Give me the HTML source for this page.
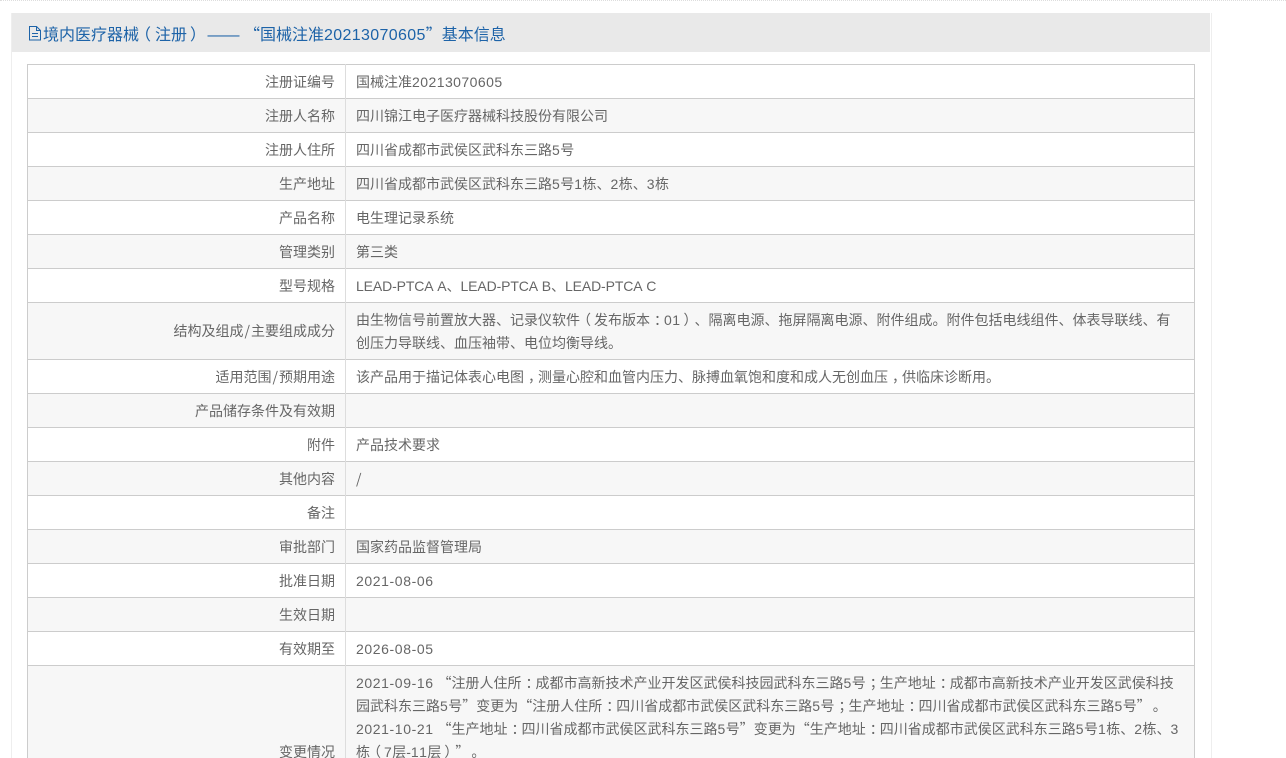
<!DOCTYPE html>
<html lang="zh-CN"><head><meta charset="utf-8"><style>
html,body{margin:0;padding:0;background:#fff;width:1286px;height:758px;overflow:hidden}
body{position:relative;font-family:"Liberation Sans","Noto Sans CJK SC",sans-serif;font-size:14px;color:#666;text-spacing-trim:space-all;font-kerning:none}
.abs{position:absolute}
#dots{left:0;top:0;width:1286px;height:1px;border-top:1px dotted #ddd}
#wrap{left:11px;top:13px;width:1199px;height:760px;border-left:1px solid #eee;border-right:1px solid #eee}
#head{left:12px;top:13px;width:1198px;height:39px;background:#e9e9e9}
#title{left:43px;top:23px;font-size:16px;line-height:20px;color:#1d63a8;white-space:nowrap}
#title .a{left:-4px}#title .b{left:3px}
.r{position:absolute;left:27px;width:1167px;border-top:1px solid #ccc;box-sizing:border-box}
.g{background:#f7f7f7}
.l{position:absolute;right:951px;text-align:right;white-space:nowrap;line-height:23px}
.v{position:absolute;left:356px;white-space:nowrap;line-height:23px}
.n{letter-spacing:.45px}
.d{letter-spacing:.6px}
.m{letter-spacing:-.12px}
.q,.s,.a,.b,.sl{font-family:"Noto Sans CJK SC",sans-serif}
.s{position:relative;left:4px}
.e{position:relative;left:2px}
.a{position:relative;left:-3px}
.b{position:relative;left:3px}
.sl{padding:0 1px}
</style></head><body>
<div id="dots" class="abs"></div>
<div id="wrap" class="abs"></div>
<div id="head" class="abs"></div>
<svg class="abs" style="left:28px;top:26px" width="14" height="15" viewBox="0 0 14 15" fill="none" stroke="#1d63a8" stroke-width="1"><path d="M1.500 .5h7l4 4v9.500h-11z M8.500 .5v4h4 M4 7.500h6 M4 10.500h6"/></svg>
<div id="title" class="abs">境内医疗器械<span class="a">（</span>注册<span class="b">）</span> —— <span class="q">“</span>国械注准<span style="letter-spacing:.35px">20213070605</span><span class="q">”</span>基本信息</div>

<div class="r" style="top:64px;height:35px"></div>
<div class="r g" style="top:98px;height:35px"></div>
<div class="r" style="top:132px;height:35px"></div>
<div class="r g" style="top:166px;height:35px"></div>
<div class="r" style="top:200px;height:35px"></div>
<div class="r g" style="top:234px;height:35px"></div>
<div class="r" style="top:268px;height:35px"></div>
<div class="r g" style="top:302px;height:58px"></div>
<div class="r" style="top:359px;height:35px"></div>
<div class="r g" style="top:393px;height:35px"></div>
<div class="r" style="top:427px;height:35px"></div>
<div class="r g" style="top:461px;height:35px"></div>
<div class="r" style="top:495px;height:35px"></div>
<div class="r g" style="top:529px;height:35px"></div>
<div class="r" style="top:563px;height:35px"></div>
<div class="r g" style="top:597px;height:35px"></div>
<div class="r" style="top:631px;height:35px"></div>
<div class="r g" style="top:665px;height:100px"></div>
<div class="abs" style="left:27px;top:64px;width:1px;height:694px;background:#ccc"></div>
<div class="abs" style="left:345px;top:64px;width:1px;height:694px;background:#ddd"></div>
<div class="abs" style="left:1194px;top:64px;width:1px;height:694px;background:#ccc"></div>

<div class="l" style="top:71px">注册证编号</div><div class="v" style="top:71px">国械注准<span class="n">20213070605</span></div>
<div class="l" style="top:105px">注册人名称</div><div class="v" style="top:105px">四川锦江电子医疗器械科技股份有限公司</div>
<div class="l" style="top:139px">注册人住所</div><div class="v" style="top:139px">四川省成都市武侯区武科东三路<span class="n">5</span>号</div>
<div class="l" style="top:173px">生产地址</div><div class="v" style="top:173px">四川省成都市武侯区武科东三路<span class="n">5</span>号<span class="n">1</span>栋、<span class="n">2</span>栋、<span class="n">3</span>栋</div>
<div class="l" style="top:207px">产品名称</div><div class="v" style="top:207px">电生理记录系统</div>
<div class="l" style="top:241px">管理类别</div><div class="v" style="top:241px">第三类</div>
<div class="l" style="top:275px">型号规格</div><div class="v" style="top:275px"><span class="m">LEAD-PTCA A</span>、<span class="m">LEAD-PTCA B</span>、<span class="m">LEAD-PTCA C</span></div>
<div class="l" style="top:320px">结构及组成<span class="sl">/</span>主要组成成分</div>
<div class="v" style="top:309px">由生物信号前置放大器、记录仪软件<span class="a">（</span>发布版本<span class="s">：</span><span class="n">01</span><span class="b">）</span>、隔离电源、拖屏隔离电源、附件组成。附件包括电线组件、体表导联线、有</div>
<div class="v" style="top:332px">创压力导联线、血压袖带、电位均衡导线。</div>
<div class="l" style="top:366px">适用范围<span class="sl">/</span>预期用途</div><div class="v" style="top:366px">该产品用于描记体表心电图<span class="s">，</span>测量心腔和血管内压力、脉搏血氧饱和度和成人无创血压<span class="s">，</span>供临床诊断用。</div>
<div class="l" style="top:400px">产品储存条件及有效期</div>
<div class="l" style="top:434px">附件</div><div class="v" style="top:434px">产品技术要求</div>
<div class="l" style="top:468px">其他内容</div><div class="v" style="top:468px"><span class="sl" style="padding:0">/</span></div>
<div class="l" style="top:502px">备注</div>
<div class="l" style="top:536px">审批部门</div><div class="v" style="top:536px">国家药品监督管理局</div>
<div class="l" style="top:570px">批准日期</div><div class="v" style="top:570px"><span class="d">2021-08-06</span></div>
<div class="l" style="top:604px">生效日期</div>
<div class="l" style="top:638px">有效期至</div><div class="v" style="top:638px"><span class="d">2026-08-05</span></div>
<div class="l" style="top:741px">变更情况</div>
<div class="v" style="top:672px"><span class="d">2021-09-16</span> <span class="q">“</span>注册人住所<span class="s">：</span>成都市高新技术产业开发区武侯科技园武科东三路<span class="n">5</span>号<span class="s">；</span>生产地址<span class="s">：</span>成都市高新技术产业开发区武侯科技</div>
<div class="v" style="top:695px">园武科东三路<span class="n">5</span>号<span class="q">”</span>变更为<span class="q">“</span>注册人住所<span class="s">：</span>四川省成都市武侯区武科东三路<span class="n">5</span>号<span class="s">；</span>生产地址<span class="s">：</span>四川省成都市武侯区武科东三路<span class="n">5</span>号<span class="q">”</span><span class="s e">。</span></div>
<div class="v" style="top:718px"><span class="d">2021-10-21</span> <span class="q">“</span>生产地址<span class="s">：</span>四川省成都市武侯区武科东三路<span class="n">5</span>号<span class="q">”</span>变更为<span class="q">“</span>生产地址<span class="s">：</span>四川省成都市武侯区武科东三路<span class="n">5</span>号<span class="n">1</span>栋、<span class="n">2</span>栋、<span class="n">3</span></div>
<div class="v" style="top:741px">栋<span class="a">（</span><span class="n">7</span>层-<span class="n">11</span>层<span class="b">）</span><span class="q">”</span><span class="s e">。</span></div>
</body></html>
